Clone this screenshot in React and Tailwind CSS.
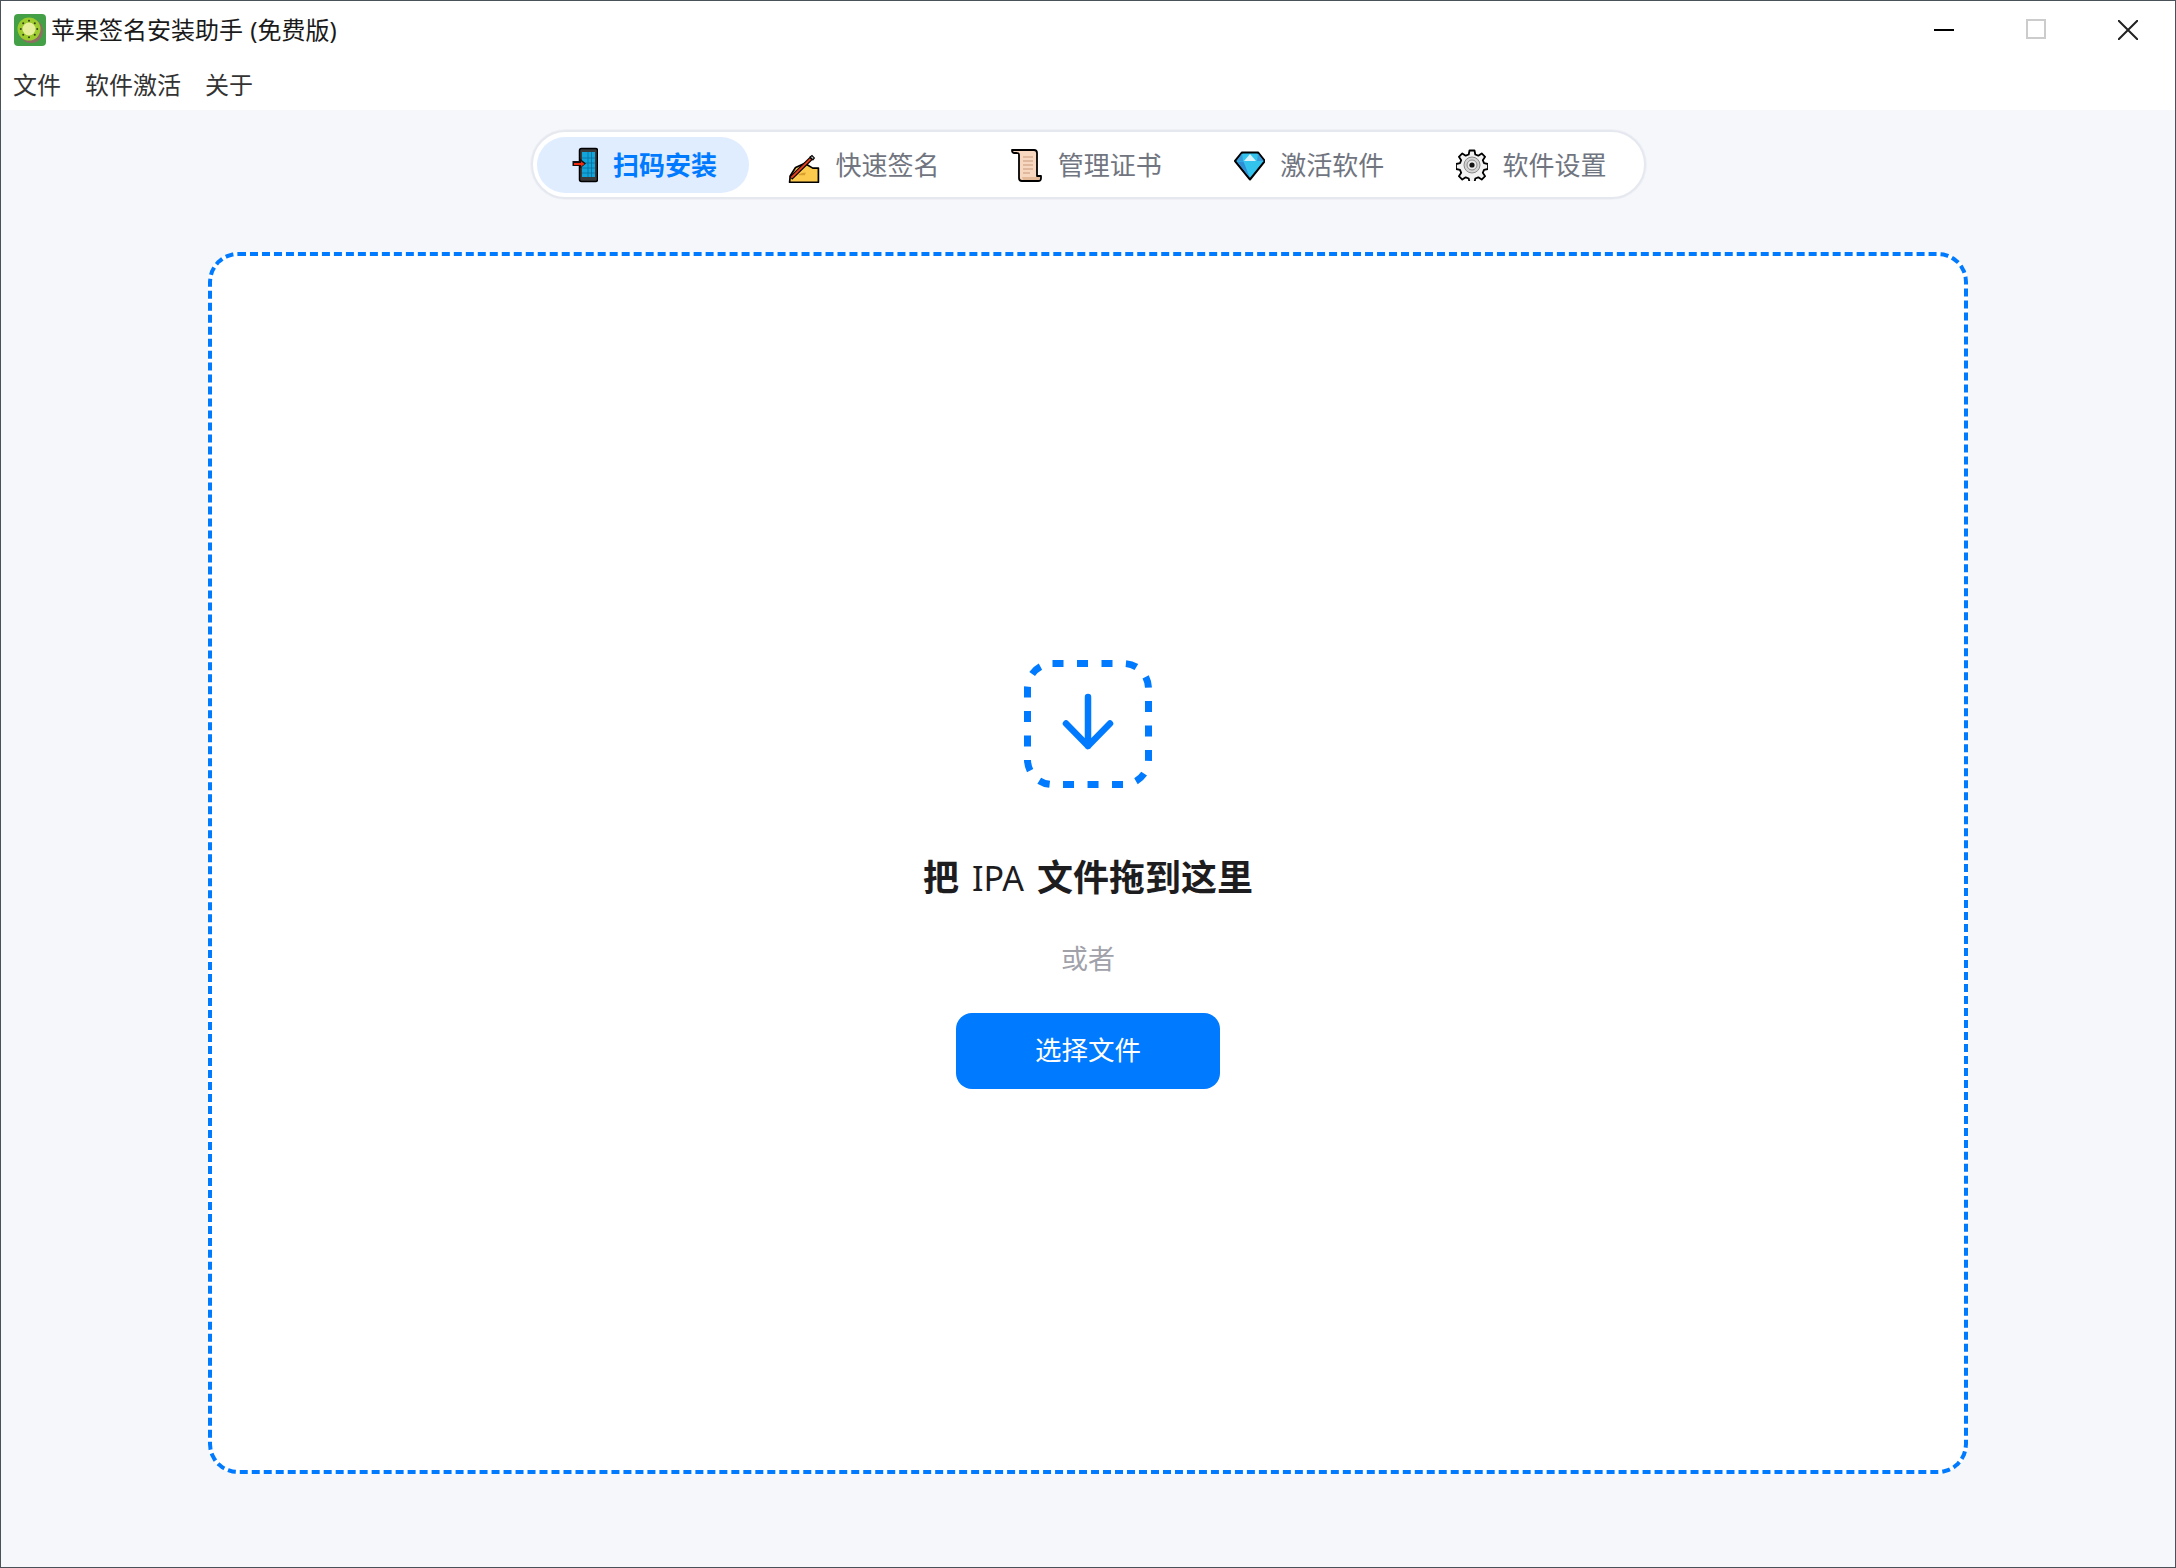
import { useState } from 'react';

const FONT = "font-['Noto_Sans','Noto_Sans_CJK_SC',sans-serif]";

const KiwiIcon = () => (
  <svg width="32" height="32" viewBox="0 0 32 32" className="shrink-0">
    <rect width="32" height="32" rx="4" fill="#43a047" />
    <circle cx="17" cy="17" r="12" fill="#8d6e63" />
    <circle cx="15" cy="15" r="11.5" fill="#9ccc2e" />
    <circle cx="15" cy="15" r="6.5" fill="#e6ee9c" />
    {[0, 45, 90, 135, 180, 225, 270, 315].map(a => (
      <circle key={a} cx="15" cy="6.8" r="1" fill="#33421a" transform={`rotate(${a} 15 15)`} />
    ))}
  </svg>
);

const PhoneIcon = () => (
  <svg width="32" height="38" viewBox="-6 -1 32 38">
    <rect x="7.500" y="1.500" width="18" height="33" rx="2" fill="#3a3a3a" stroke="#000" strokeWidth="1.500" />
    <rect x="10" y="5" width="13" height="25" fill="#12a5dc" />
    <path d="M16 5v25M19.500 5v25M10 11h13M10 16h13M10 21h13M10 26h13" stroke="#0a6f9c" strokeWidth="0.800" />
    <path d="M0.500 14h7.500v-2.500l6 5-6 5v-2.500H0.500z" fill="#111" />
    <path d="M2 16h7v-1.800l3.500 2.800-3.500 2.800V18H2z" fill="#f02b12" />
  </svg>
);

const SignIcon = () => (
  <svg width="34" height="40" viewBox="0 0 34 40">
    <path d="M1.700 38.300 2.300 31.700 8 22.700 18 18.300 26.300 23.300H32.300V38.300z" fill="#fccb4e" stroke="#000" strokeWidth="1.800" strokeLinejoin="round" />
    <path d="M11 30c3-1 5-2 8-2l-1 3h-6z" fill="#d9a02f" />
    <path d="M3 34 25.300 12.300" stroke="#000" strokeWidth="4.400" />
    <path d="M3.500 33.500 24 13.500" stroke="#e8401c" strokeWidth="2" />
    <path d="M23.500 11.500l2-1.500 2.500 2.500-1.500 2z" fill="#c9c4c0" stroke="#000" strokeWidth="1.200" />
  </svg>
);

const ScrollIcon = () => (
  <svg width="32" height="34" viewBox="0 0 32 34">
    <path d="M1 2h22a3 3 0 0 1 3 3v23h4v2a3 3 0 0 1-3 3H11a3 3 0 0 1-3-3V7c0-2-1-2-3-2H3C1.500 5 1 3.500 1 2z" fill="#f7d7c0" stroke="#000" strokeWidth="1.800" strokeLinejoin="round" />
    <path d="M11 29h18v2a1.500 1.500 0 0 1-1.500 1H12z" fill="#e3b998" />
    <path d="M12 9h10M12 13h10M12 17h10M12 21h10M12 25h7" stroke="#c79a7c" strokeWidth="1.200" />
  </svg>
);

const GemIcon = () => (
  <svg width="32" height="34" viewBox="-1 -3 32 34">
    <path d="M8 1.500h16L31 10 16 28.500 1 10z" fill="#33c4ee" stroke="#000" strokeWidth="2" strokeLinejoin="round" />
    <path d="M8 2.500 2.500 10H9z M24 2.500 29.500 10H23z" fill="#3a9ad9" />
    <path d="M16 3l6 7H10z" fill="#d6f3fc" />
    <path d="M3 10.500h6.500L16 27z" fill="#2f8fd6" />
  </svg>
);

const GearIcon = () => (
  <svg width="32" height="32" viewBox="0 0 32 32">
    <path d="M13.500 1.500h5l.8 4 3 1.200 3.400-2.300 3.400 3.400-2.300 3.400 1.200 3 4 .8v5l-4 .8-1.200 3 2.300 3.400-3.400 3.400-3.400-2.300-3 1.200-.8 4h-5l-.8-4-3-1.200-3.400 2.300-3.400-3.400 2.300-3.400-1.200-3-4-.8v-5l4-.8 1.200-3-2.300-3.400 3.400-3.400 3.400 2.300 3-1.200z" fill="#f2f2f2" stroke="#000" strokeWidth="1.800" strokeLinejoin="round" />
    <circle cx="16" cy="16" r="8" fill="#d4d4d4" stroke="#8a8a8a" strokeWidth="1" />
    <circle cx="16" cy="16" r="5" fill="#ececec" stroke="#8a8a8a" strokeWidth="1" />
    <circle cx="16" cy="16" r="2.600" fill="#111" />
  </svg>
);

const tabs = [
  { label: '扫码安装', icon: <PhoneIcon /> },
  { label: '快速签名', icon: <SignIcon /> },
  { label: '管理证书', icon: <ScrollIcon /> },
  { label: '激活软件', icon: <GemIcon /> },
  { label: '软件设置', icon: <GearIcon /> },
];

const DropIcon = () => (
  <svg width="128" height="128" viewBox="0 0 128 128" fill="none" stroke="#007aff">
    <rect x="3.500" y="3.500" width="121" height="121" rx="25" strokeWidth="7" strokeDasharray="11 13.500" />
    <path d="M64 37v49M42 63.500 64 86l22-22.500" strokeWidth="6.500" strokeLinecap="round" strokeLinejoin="round" />
  </svg>
);

export default function App() {
  const [active, setActive] = useState(0);

  return (
    <div className={`h-screen flex flex-col bg-[#f5f7fb] border border-[#4b5158] overflow-hidden ${FONT}`}>
      <div className="h-[59px] shrink-0 bg-white flex justify-between">
        <div className="h-[57px] flex items-center pl-[13px]">
          <KiwiIcon />
          <span className="ml-[5px] text-[24px] text-[#1a1a1a] [word-spacing:1px]">苹果签名安装助手 (免费版)</span>
        </div>
        <div className="flex pr-[1px]">
          <button className="w-[92px] h-[57px] flex items-center justify-center">
            <span className="block w-[20px] h-[2px] bg-black" />
          </button>
          <button className="w-[92px] h-[56px] flex items-center justify-center">
            <span className="block w-[20px] h-[20px] border-2 border-[#cccccc]" />
          </button>
          <button className="w-[92px] h-[57px] flex items-center justify-center">
            <svg width="20" height="20" viewBox="0 0 20 20" stroke="#222" strokeWidth="2">
              <path d="M0 0l20 20M20 0 0 20" />
            </svg>
          </button>
        </div>
      </div>

      <div className="h-[50px] shrink-0 bg-white flex items-center gap-6 pl-3 text-[24px] text-[#333333]">
        <span>文件</span>
        <span>软件激活</span>
        <span>关于</span>
      </div>

      <main className="flex-1 flex flex-col items-center pt-5">
        <nav className="grid grid-cols-5 gap-[10px] w-[1115px] h-[69px] p-[4.5px] bg-white border-2 border-[#e6e8f0] rounded-full shadow-[0_0_0_1px_#eef0f5]">
          {tabs.map((tab, i) => (
            <button
              key={tab.label}
              onClick={() => setActive(i)}
              className={`h-14 rounded-full flex items-center pl-[29px] gap-[15px] text-[26px] ${active === i ? 'bg-[#e0edff] text-[#007aff] font-semibold' : 'text-[#71757f]'}`}
            >
              <span className="w-8 h-9 flex items-center justify-center">{tab.icon}</span>
              <span className="mt-[2px]">{tab.label}</span>
            </button>
          ))}
        </nav>

        <section className="mt-[53px] w-[1760px] h-[1222px] bg-white border-4 border-dashed border-[#007aff] rounded-[30px] flex flex-col items-center pt-[404px]">
          <DropIcon />
          <h1 className="mt-[63px] text-[36px] leading-[54px] font-bold text-[#1d1d1f] [word-spacing:3.5px]">
            把 <span className="font-normal text-[34px]">IPA</span> 文件拖到这里
          </h1>
          <p className="mt-[34px] text-[27px] leading-[40px] text-[#a1a1aa]">或者</p>
          <button className="mt-[34px] w-[264px] h-[76px] rounded-2xl bg-[#007aff] text-white text-[26.5px]">
            选择文件
          </button>
        </section>
      </main>
    </div>
  );
}
